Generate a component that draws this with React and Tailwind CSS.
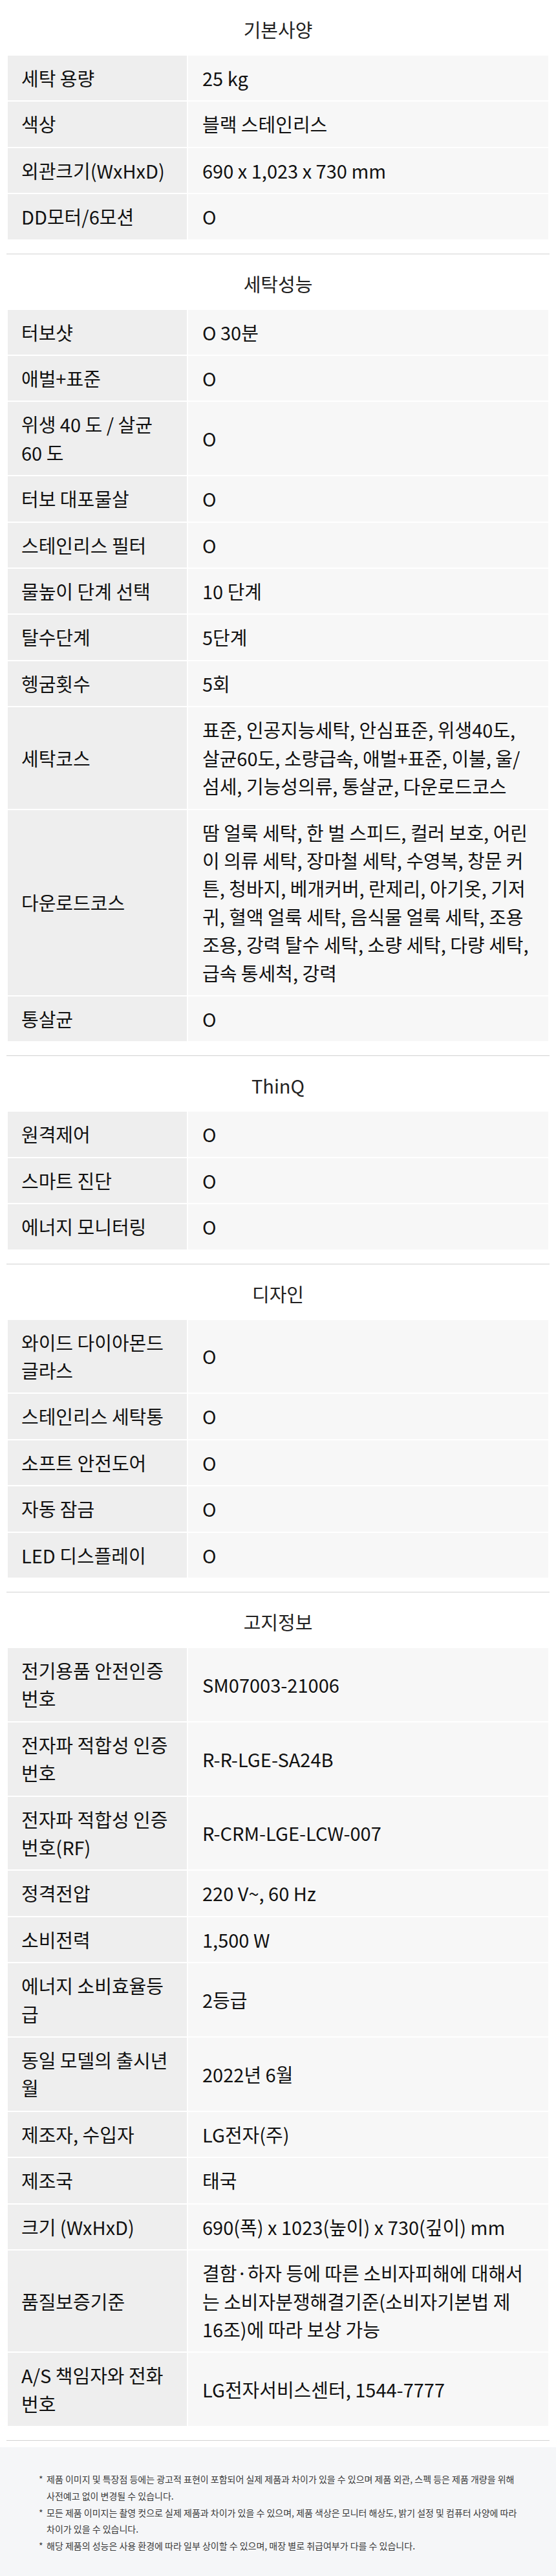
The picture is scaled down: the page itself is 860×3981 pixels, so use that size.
import React from 'react';

// 줄바꿈은 원본 화면과 동일하게 직접 지정
const specSections = [
    {
        title: '기본사양',
        rows: [
            ['세탁 용량', '25 kg'],
            ['색상', '블랙 스테인리스'],
            ['외관크기(WxHxD)', '690 x 1,023 x 730 mm'],
            ['DD모터/6모션', 'O'],
        ],
    },
    {
        title: '세탁성능',
        rows: [
            ['터보샷', 'O 30분'],
            ['애벌+표준', 'O'],
            ['위생 40 도 / 살균\n60 도', 'O'],
            ['터보 대포물살', 'O'],
            ['스테인리스 필터', 'O'],
            ['물높이 단계 선택', '10 단계'],
            ['탈수단계', '5단계'],
            ['헹굼횟수', '5회'],
            ['세탁코스', '표준, 인공지능세탁, 안심표준, 위생40도,\n살균60도, 소량급속, 애벌+표준, 이불, 울/\n섬세, 기능성의류, 통살균, 다운로드코스'],
            ['다운로드코스', '땀 얼룩 세탁, 한 벌 스피드, 컬러 보호, 어린\n이 의류 세탁, 장마철 세탁, 수영복, 창문 커\n튼, 청바지, 베개커버, 란제리, 아기옷, 기저\n귀, 혈액 얼룩 세탁, 음식물 얼룩 세탁, 조용\n조용, 강력 탈수 세탁, 소량 세탁, 다량 세탁,\n급속 통세척, 강력'],
            ['통살균', 'O'],
        ],
    },
    {
        title: 'ThinQ',
        rows: [
            ['원격제어', 'O'],
            ['스마트 진단', 'O'],
            ['에너지 모니터링', 'O'],
        ],
    },
    {
        title: '디자인',
        rows: [
            ['와이드 다이아몬드\n글라스', 'O'],
            ['스테인리스 세탁통', 'O'],
            ['소프트 안전도어', 'O'],
            ['자동 잠금', 'O'],
            ['LED 디스플레이', 'O'],
        ],
    },
    {
        title: '고지정보',
        rows: [
            ['전기용품 안전인증\n번호', 'SM07003-21006'],
            ['전자파 적합성 인증\n번호', 'R-R-LGE-SA24B'],
            ['전자파 적합성 인증\n번호(RF)', 'R-CRM-LGE-LCW-007'],
            ['정격전압', '220 V~, 60 Hz'],
            ['소비전력', '1,500 W'],
            ['에너지 소비효율등\n급', '2등급'],
            ['동일 모델의 출시년\n월', '2022년 6월'],
            ['제조자, 수입자', 'LG전자(주)'],
            ['제조국', '태국'],
            ['크기 (WxHxD)', '690(폭) x 1023(높이) x 730(깊이) mm'],
            ['품질보증기준', '결함·하자 등에 따른 소비자피해에 대해서\n는 소비자분쟁해결기준(소비자기본법 제\n16조)에 따라 보상 가능'],
            ['A/S 책임자와 전화\n번호', 'LG전자서비스센터, 1544-7777'],
        ],
    },
];

const notices = [
    '제품 이미지 및 특장점 등에는 광고적 표현이 포함되어 실제 제품과 차이가 있을 수 있으며 제품 외관, 스펙 등은 제품 개량을 위해\n사전예고 없이 변경될 수 있습니다.',
    '모든 제품 이미지는 촬영 컷으로 실제 제품과 차이가 있을 수 있으며, 제품 색상은 모니터 해상도, 밝기 설정 및 컴퓨터 사양에 따라\n차이가 있을 수 있습니다.',
    '해당 제품의 성능은 사용 환경에 따라 일부 상이할 수 있으며, 매장 별로 취급여부가 다를 수 있습니다.',
];

const SpecRow = ({ label, value }) => (
    <div className="grid grid-cols-[277px_1fr] gap-[2px]">
        {/* 항목명 */}
        <div className="bg-[#eeeeee] pl-[21px] py-[13px] flex items-center whitespace-pre text-[29px] leading-[43.4px] text-[#111]">
            {label}
        </div>
        {/* 값 */}
        <div className="bg-[#f7f7f7] pl-[22px] py-[13px] flex items-center whitespace-pre text-[29px] leading-[43.4px] text-[#111]">
            {value}
        </div>
    </div>
);

const SpecSection = ({ title, rows }) => (
    <section>
        <h2 className="pt-6 pb-5 text-center text-[29px] leading-[42px] font-normal text-[#222]">
            {title}
        </h2>
        <div className="px-[12px] flex flex-col gap-[2px]">
            {rows.map(([label, value]) => (
                <SpecRow key={label} label={label} value={value} />
            ))}
        </div>
        <div className="mt-[22px] mx-[10px] h-px bg-[#d2d2d2]" />
    </section>
);

const App = () => {
    return (
        <div className="w-[860px] bg-white font-['Noto_Sans_CJK_KR','Noto_Sans',sans-serif]">
            {specSections.map((section) => (
                <SpecSection key={section.title} title={section.title} rows={section.rows} />
            ))}

            {/* 안내 문구 */}
            <div className="mt-[10px] bg-[#f5f6f8] pt-[37px] pb-[35px] pl-[60px] pr-[40px]">
                <ul className="flex flex-col">
                    {notices.map((text) => (
                        <li key={text} className="flex text-[14px] leading-[25.7px] text-[#3a3a3a]">
                            <span className="w-[12px] shrink-0">*</span>
                            <span className="whitespace-pre">{text}</span>
                        </li>
                    ))}
                </ul>
            </div>
        </div>
    );
};

export default App;
